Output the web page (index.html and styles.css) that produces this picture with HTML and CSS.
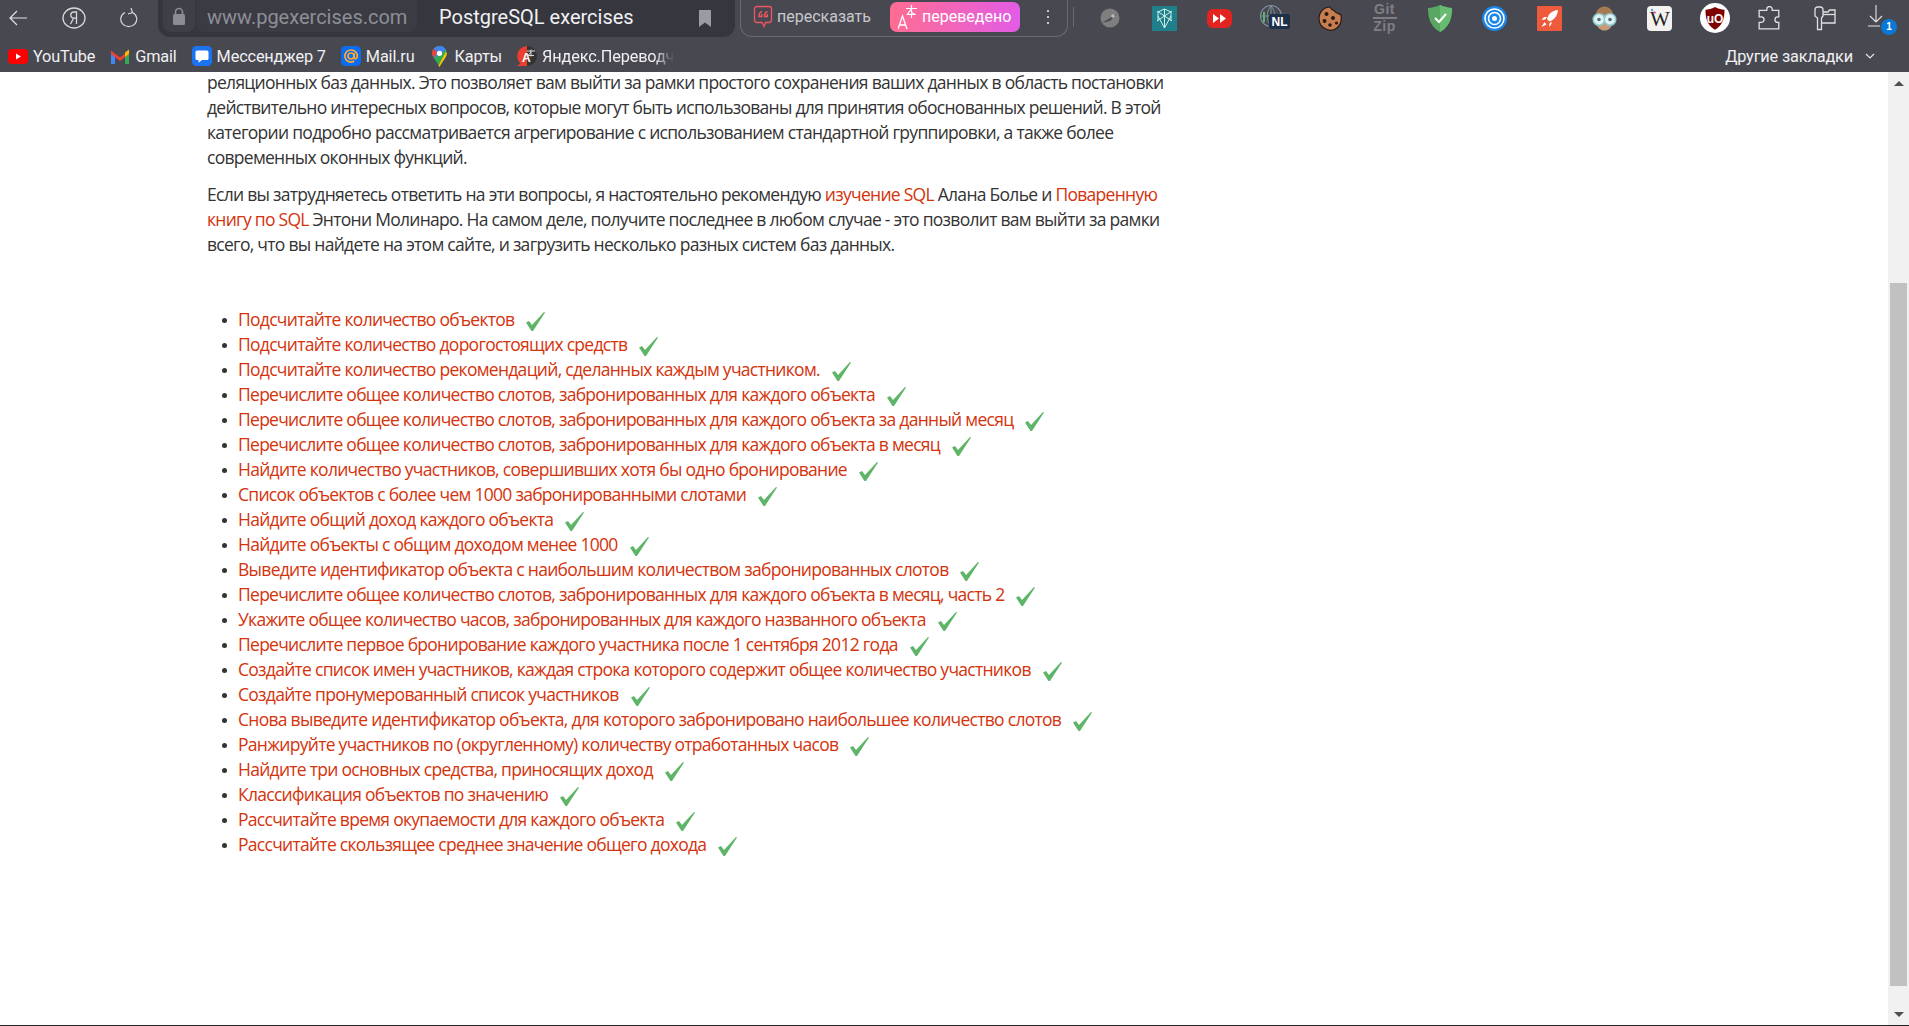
FILE: index.html
```html
<!DOCTYPE html>
<html lang="ru">
<head>
    <meta charset="UTF-8">
    <title>PostgreSQL exercises</title>
    <link rel="stylesheet" href="styles.css">
</head>
<body>
<svg class="defs" width="0" height="0"><symbol id="tick" viewBox="0 0 19 19"><path d="M0 10.500L3 9l3 4L18 0l1 .5L7 19H5.500z" fill="#5fb567"/></symbol></svg>
<div id="chrome">
    <div id="toolbar">
        <div class="nav">
            <svg class="nav-back" width="18" height="16" viewBox="0 0 18 16"><path d="M18 8H1M8 1L1 8l7 7" fill="none" stroke="#e4e4e6" stroke-width="1.200"/></svg>
            <svg class="nav-ya" width="24" height="22" viewBox="0 0 24 22"><ellipse cx="12" cy="11" rx="11" ry="10" fill="none" stroke="#d8d8da" stroke-width="1.300"/><path d="M14.500 17V5h-2.300c-2.200 0-3.400 1.200-3.400 3.100s1.200 3.100 3.400 3.100h2.300M11.500 11.200L8.500 17" fill="none" stroke="#d8d8da" stroke-width="1.300"/></svg>
            <svg class="nav-reload" width="18" height="22" viewBox="0 0 18 22"><path d="M12.500 5.500a8 7.500 0 1 1-7.500 0M11 1l1.500 4.500L8 7" fill="none" stroke="#d8d8da" stroke-width="1.200"/></svg>
        </div>
        <div id="address">
            <div class="lock"><svg width="14" height="18" viewBox="0 0 14 18"><path d="M3.500 8V5a3.500 3.500 0 0 1 7 0v3" fill="none" stroke="#8b8c92" stroke-width="1.600"/><rect x="1" y="7" width="12" height="11" rx="1.500" fill="#8b8c92"/></svg></div>
            <div class="domain">www.pgexercises.com</div>
            <div class="page-title">PostgreSQL exercises</div>
            <svg class="bookmark" width="14" height="18" viewBox="0 0 14 18"><path d="M1 1h12v17l-6-4.500L1 18z" fill="#9b9ca1"/></svg>
        </div>
        <div id="translate">
            <div class="retell">
                <svg width="20" height="23" viewBox="0 0 20 23"><path d="M4 1.500h12a2.500 2.500 0 0 1 2.500 2.500v11a2.500 2.500 0 0 1-2.500 2.500h-3.500L11 21.500l-2-4H4A2.500 2.500 0 0 1 1.500 15V4A2.500 2.500 0 0 1 4 1.500z" fill="none" stroke="#f0565f" stroke-width="1.300"/><path d="M9 6.500C7 7 6 8.500 6 11.500h2.800V9M14.500 6.500c-2 .5-3 2-3 5h2.800V9" fill="none" stroke="#f0565f" stroke-width="1.500"/></svg>
                <span>пересказать</span>
            </div>
            <div class="translated">
                <svg width="20" height="26" viewBox="0 0 20 26"><path d="M0 25L4.500 12 9 25M1.500 21h6" fill="none" stroke="#fff" stroke-width="1.300"/><path d="M8 4.500h11M13.500 1v13M13.500 4.500l-4 6h8l-4-2" fill="none" stroke="#fff" stroke-width="1.200"/></svg>
                <span>переведено</span>
            </div>
            <div class="dots"><i></i><i></i><i></i></div>
        </div>
        <div class="sep"></div>
        <div id="extensions">
            <div class="ext"><svg width="20" height="20" viewBox="0 0 20 20"><circle cx="10" cy="10" r="9.500" fill="#7f7f80"/><path d="M1.500 15L17 6l-7 7z" fill="#4b4b52"/><circle cx="13" cy="8" r="1.800" fill="#bbb"/></svg></div>
            <div class="ext"><svg width="25" height="25" viewBox="0 0 25 25"><rect width="25" height="25" fill="#1f7f8a"/><path d="M12.500 3v19M5 5l15 10M20 5L5 15M6 10l6.500 12L19 10M6 6v9M19 6v9M6 6l6.500-3L19 6" fill="none" stroke="#cfeeee" stroke-width="1"/></svg></div>
            <div class="ext"><svg width="25" height="19" viewBox="0 0 25 19"><rect width="25" height="19" rx="6" fill="#e3231f"/><path d="M6 5l6 4.500L6 14zM13 5l6 4.500L13 14z" fill="#fff"/></svg></div>
            <div class="ext"><svg width="32" height="26" viewBox="0 0 32 26"><circle cx="12" cy="11" r="10.500" fill="none" stroke="#7a8fa0" stroke-width="1.200"/><path d="M12 1v20M1 11h20M12 1c-5 5-5 15 0 20M12 1c5 5 5 15 0 20" fill="none" stroke="#7a8fa0" stroke-width="1"/><path d="M5 7v10" stroke="#5fb567" stroke-width="2"/><rect x="10" y="9" width="21" height="15" rx="2.500" fill="#1c3048"/><text x="20.500" y="21" class="ext-nl">NL</text></svg></div>
            <div class="ext"><svg width="24" height="25" viewBox="0 0 24 25"><path d="M12 1c.500 3 4 2.500 5 4.500s4.500 2 6 3.500c1 5.500-.5 9.500-3.500 12.500S13 25 9 23.500 1 19 1 12.500 6 1 12 1z" fill="#c77d4f" stroke="#2a1a12" stroke-width="1.200"/><circle cx="8.500" cy="8" r="2" fill="#2a1a12"/><circle cx="15" cy="12" r="2" fill="#2a1a12"/><circle cx="6.500" cy="15" r="2" fill="#2a1a12"/><circle cx="12" cy="19" r="1.800" fill="#2a1a12"/><circle cx="18.500" cy="17" r="1.600" fill="#2a1a12"/></svg></div>
            <div class="ext ext-gitzip"><span>Git</span><span class="wave"></span><span>Zip</span></div>
            <div class="ext"><svg width="24" height="27" viewBox="0 0 24 27"><path d="M12 0c4 1.800 8 2.700 12 3 0 10-2.500 19-12 24C2.500 22 0 13 0 3c4-.3 8-1.200 12-3z" fill="#58a863"/><path d="M12 0c4 1.800 8 2.700 12 3 0 10-2.500 19-12 24z" fill="#68bc71"/><path d="M7 13l4 4 7-8" fill="none" stroke="#fff" stroke-width="2"/></svg></div>
            <div class="ext"><svg width="25" height="25" viewBox="0 0 25 25"><circle cx="12.500" cy="12.500" r="12.500" fill="#1a86ea"/><circle cx="12.500" cy="12.500" r="9.500" fill="none" stroke="#fff" stroke-width="1.600"/><circle cx="12.500" cy="12.500" r="6" fill="none" stroke="#fff" stroke-width="1.600"/><circle cx="12.500" cy="12.500" r="2.500" fill="#fff"/></svg></div>
            <div class="ext"><svg width="25" height="25" viewBox="0 0 25 25"><rect width="25" height="25" rx="1" fill="#ee5a3c"/><path d="M21 4c-6 .5-9.500 4-11 9l2.500 2.500C17 14 20.500 10 21 4zM10 11H7l-2.500 3 3.500-.5zM14.500 15.500V18L12 21l.5-3.500zM7.500 16L4.500 21l5-2.500z" fill="#fff"/></svg></div>
            <div class="ext"><svg width="25" height="25" viewBox="0 0 25 25"><ellipse cx="12.500" cy="13" rx="9" ry="11.500" fill="#c59b78"/><path d="M3.500 11c0-7 4.500-10.500 9-10.500s9 3.500 9 10.500c-3.500-3-14.500-3-18 0z" fill="#a67b52"/><circle cx="7" cy="13.500" r="5.800" fill="#dff3f2" stroke="#8fc9d0" stroke-width="1.500"/><circle cx="18" cy="13.500" r="5.800" fill="#dff3f2" stroke="#8fc9d0" stroke-width="1.500"/><circle cx="7" cy="13.500" r="1.800" fill="#4f6d78"/><circle cx="18" cy="13.500" r="1.800" fill="#4f6d78"/></svg></div>
            <div class="ext"><svg width="25" height="25" viewBox="0 0 25 25"><rect width="25" height="25" rx="4" fill="#f4f2ee"/><text x="13" y="20" class="ext-w">W</text><circle cx="5" cy="4" r="1.200" fill="#39b8d8"/><circle cx="7.500" cy="6.500" r="1.200" fill="#e75a9c"/></svg></div>
            <div class="ext"><svg width="30" height="30" viewBox="0 0 30 30"><circle cx="15" cy="15" r="15" fill="#fff"/><path d="M15 4c3.500 1.800 6.500 2.500 9.500 2.700 0 9-1.800 15.500-9.500 20-7.700-4.500-9.500-11-9.500-20C8.500 6.500 11.500 5.800 15 4z" fill="#800000"/><text x="15" y="19.500" class="ext-uo">uO</text></svg></div>
            <div class="ext"><svg width="23" height="24" viewBox="0 0 21 22"><path d="M8 4V3a2.500 2.500 0 0 1 5 0v1h6v6h-1a2.500 2.500 0 0 0 0 5h1v6H1v-6h2a2.500 2.500 0 0 0 0-5H1V4z" fill="none" stroke="#e0e0e2" stroke-width="1.200"/></svg></div>
            <div class="ext"><svg width="22" height="25" viewBox="0 0 22 25"><path d="M1 3.500A2.500 2.500 0 0 1 3.500 1h3A2.500 2.500 0 0 1 9 3.500V10L7.500 12v11.500h-4V12L1 10z" fill="none" stroke="#e0e0e2" stroke-width="1.300"/><path d="M9 6h5l1.500-2H21v13H8" fill="none" stroke="#e0e0e2" stroke-width="1.300"/><path d="M9 8.500h12" stroke="#e0e0e2" stroke-width="1.300"/></svg></div>
            <div class="ext ext-dl">
                <svg width="18" height="22" viewBox="0 0 18 22"><path d="M8 0v17M2 11l6 6 6-6M0 21h12" fill="none" stroke="#e4e4e6" stroke-width="1.100"/></svg>
                <span class="badge">1</span>
            </div>
        </div>
    </div>
    <div id="bookmarks">
        <div class="mark"><span class="fav"><svg width="20" height="15" viewBox="0 0 20 15"><rect width="20" height="15" rx="4" fill="#f00"/><path d="M8 4.500l5 3-5 3z" fill="#fff"/></svg></span>YouTube</div>
        <div class="mark"><span class="fav"><svg width="18" height="15" viewBox="0 0 18 15"><path d="M0 2.500V15h4V5.500z" fill="#4285f4"/><path d="M18 2.500V15h-4V5.500z" fill="#34a853"/><path d="M0 1.500L9 8.500l9-7V5l-9 7-9-7z" fill="#ea4335"/><path d="M14 3.500L18 .5V5l-4 3z" fill="#fbbc04"/></svg></span>Gmail</div>
        <div class="mark"><span class="fav"><svg width="20" height="20" viewBox="0 0 20 20"><rect width="20" height="20" rx="4.500" fill="#1a73f0"/><path d="M5 4.500h10a1.500 1.500 0 0 1 1.500 1.500v6.500A1.500 1.500 0 0 1 15 14h-5l-3.500 2.800V14H5a1.500 1.500 0 0 1-1.500-1.500V6A1.500 1.500 0 0 1 5 4.500z" fill="#fff"/></svg></span>Мессенджер 7</div>
        <div class="mark"><span class="fav"><svg width="20" height="20" viewBox="0 0 20 20"><rect width="20" height="20" rx="4.500" fill="#0a6cf0"/><circle cx="10" cy="10" r="3" fill="none" stroke="#ffa930" stroke-width="1.700"/><path d="M13 7v4c0 2.400 3 2.400 3.200-.6.400-3.700-2.500-6.400-6.200-6.400a6 6 0 1 0 3.200 11" fill="none" stroke="#ffa930" stroke-width="1.700"/></svg></span>Mail.ru</div>
        <div class="mark"><span class="fav"><svg width="15" height="21" viewBox="0 0 14 20"><path d="M7 0a7 7 0 0 1 7 7c0 4-4 7-7 13C4 14 0 11 0 7a7 7 0 0 1 7-7z" fill="#34a853"/><path d="M7 0a7 7 0 0 1 6 3.500L2 11.500C.7 10 0 8.700 0 7a7 7 0 0 1 7-7z" fill="#4285f4"/><path d="M14 7c0 4-4 7-7 13l-1-1.500 7-13z" fill="#fbbc04"/><path d="M1.500 2.500L5 6 2 11C.7 10 0 8.700 0 7c0-1.700.5-3.200 1.500-4.500z" fill="#ea4335"/><circle cx="7" cy="7" r="2.500" fill="#fff"/></svg></span>Карты</div>
        <div class="mark mark-fade"><span class="fav"><svg width="20" height="20" viewBox="0 0 20 20"><circle cx="10" cy="10" r="10" fill="#333"/><path d="M10 0a10 10 0 0 0 0 20z" fill="#e8402c"/><path d="M0 20l10-8v8z" fill="#e8402c"/><text x="5" y="16" class="ya-a">A</text><path d="M10 5h8M14 3.500v7M14 6l-3 3.500h6" fill="none" stroke="#ddd" stroke-width="1"/></svg></span><span class="fade-text">Яндекс.Переводчик</span></div>
        <div class="mark-other">Другие закладки<svg width="10" height="6" viewBox="0 0 10 6"><path d="M1 1l4 4 4-4" fill="none" stroke="#e4e4e6" stroke-width="1.200"/></svg></div>
    </div>
</div>
<div id="viewport">
    <div id="content">
        <p>реляционных баз данных. Это позволяет вам выйти за рамки простого сохранения ваших данных в область постановки действительно интересных вопросов, которые могут быть использованы для принятия обоснованных решений. В этой категории подробно рассматривается агрегирование с использованием стандартной группировки, а также более современных оконных функций.</p>
        <p>Если вы затрудняетесь ответить на эти вопросы, я настоятельно рекомендую <a href="#">изучение SQL</a> Алана Болье и <a href="#">Поваренную книгу по SQL</a> Энтони Молинаро. На самом деле, получите последнее в любом случае - это позволит вам выйти за рамки всего, что вы найдете на этом сайте, и загрузить несколько разных систем баз данных.</p>
        <ul id="tasks">
            <li><a href="#">Подсчитайте количество объектов</a><svg class="tick"><use href="#tick"/></svg></li>
            <li><a href="#">Подсчитайте количество дорогостоящих средств</a><svg class="tick"><use href="#tick"/></svg></li>
            <li><a href="#">Подсчитайте количество рекомендаций, сделанных каждым участником.</a><svg class="tick"><use href="#tick"/></svg></li>
            <li><a href="#">Перечислите общее количество слотов, забронированных для каждого объекта</a><svg class="tick"><use href="#tick"/></svg></li>
            <li><a href="#">Перечислите общее количество слотов, забронированных для каждого объекта за данный месяц</a><svg class="tick"><use href="#tick"/></svg></li>
            <li><a href="#">Перечислите общее количество слотов, забронированных для каждого объекта в месяц</a><svg class="tick"><use href="#tick"/></svg></li>
            <li><a href="#">Найдите количество участников, совершивших хотя бы одно бронирование</a><svg class="tick"><use href="#tick"/></svg></li>
            <li><a href="#">Список объектов с более чем 1000 забронированными слотами</a><svg class="tick"><use href="#tick"/></svg></li>
            <li><a href="#">Найдите общий доход каждого объекта</a><svg class="tick"><use href="#tick"/></svg></li>
            <li><a href="#">Найдите объекты с общим доходом менее 1000</a><svg class="tick"><use href="#tick"/></svg></li>
            <li><a href="#">Выведите идентификатор объекта с наибольшим количеством забронированных слотов</a><svg class="tick"><use href="#tick"/></svg></li>
            <li><a href="#">Перечислите общее количество слотов, забронированных для каждого объекта в месяц, часть 2</a><svg class="tick"><use href="#tick"/></svg></li>
            <li><a href="#">Укажите общее количество часов, забронированных для каждого названного объекта</a><svg class="tick"><use href="#tick"/></svg></li>
            <li><a href="#">Перечислите первое бронирование каждого участника после 1 сентября 2012 года</a><svg class="tick"><use href="#tick"/></svg></li>
            <li><a href="#">Создайте список имен участников, каждая строка которого содержит общее количество участников</a><svg class="tick"><use href="#tick"/></svg></li>
            <li><a href="#">Создайте пронумерованный список участников</a><svg class="tick"><use href="#tick"/></svg></li>
            <li><a href="#">Снова выведите идентификатор объекта, для которого забронировано наибольшее количество слотов</a><svg class="tick"><use href="#tick"/></svg></li>
            <li><a href="#">Ранжируйте участников по (округленному) количеству отработанных часов</a><svg class="tick"><use href="#tick"/></svg></li>
            <li><a href="#">Найдите три основных средства, приносящих доход</a><svg class="tick"><use href="#tick"/></svg></li>
            <li><a href="#">Классификация объектов по значению</a><svg class="tick"><use href="#tick"/></svg></li>
            <li><a href="#">Рассчитайте время окупаемости для каждого объекта</a><svg class="tick"><use href="#tick"/></svg></li>
            <li><a href="#">Рассчитайте скользящее среднее значение общего дохода</a><svg class="tick"><use href="#tick"/></svg></li>
        </ul>
    </div>
    <div id="scrollbar">
        <div class="arrow arrow-up"></div>
        <div class="track"><div class="thumb"></div></div>
        <div class="arrow arrow-down"></div>
    </div>
</div>
<div id="bottomline"></div>
</body>
</html>
```
FILE: styles.css
```css
html, body{ margin:0; padding:0; height:100%; overflow:hidden; background:#fff; }
body{ display:flex; flex-direction:column; font-family:"Open Sans","Noto Sans",sans-serif; }
.defs{ position:absolute; }

#chrome{ height:72px; background:#484851; color:#f0f0f2; flex:none; display:flex; flex-direction:column; font-family:Roboto,"Noto Sans",sans-serif; }
#toolbar{ height:37px; display:flex; align-items:flex-start; }
.nav{ display:flex; align-items:center; width:158px; height:36px; flex:none; }
.nav-back{ margin-left:9px; }
.nav-ya{ margin-left:35px; }
.nav-reload{ margin-left:34px; }

#address{ width:577px; height:37px; background:#35363e; border-radius:0 0 12px 12px; display:flex; align-items:flex-start; flex:none; position:relative; }
.lock{ width:32px; height:32px; margin-left:5px; background:#3e3f47; border-radius:0 0 8px 8px; display:flex; align-items:center; justify-content:center; }
.domain{ width:221px; box-sizing:border-box; margin-left:1px; padding-left:11px; height:32px; line-height:35px; font-size:20px; color:#8e8f96; background:#3a3b43; border-radius:0 0 8px 8px; }
.page-title{ margin-left:22px; font-size:20px; line-height:35px; color:#f2f2f4; }
.bookmark{ position:absolute; right:23px; top:9px; }

#translate{ width:328px; height:37px; border:1px solid #6a6a72; border-top:0; border-radius:0 0 12px 12px; margin-left:5px; box-sizing:border-box; display:flex; align-items:flex-start; flex:none; padding-top:2px; }
.retell{ display:flex; align-items:center; gap:4px; margin-left:12px; height:29px; font-size:16px; color:#c8c8cc; width:137px; flex:none; }
.translated{ display:flex; align-items:center; gap:4px; width:130px; height:30px; box-sizing:border-box; padding:0 0 1px 8px; background:linear-gradient(90deg,#ff6d92,#e25ce6); border-radius:7px; font-size:16px; color:#fff; flex:none; }
.dots{ display:flex; flex-direction:column; gap:4px; margin:8px 0 0 27px; }
.dots i{ width:2px; height:2px; background:#c8c8cc; }
.sep{ width:1px; height:20px; background:#6a6a72; margin:7px 0 0 5px; flex:none; }

#extensions{ display:flex; margin-left:8px; height:36px; }
.ext{ width:55px; height:36px; display:flex; align-items:center; justify-content:center; position:relative; flex:none; }
.ext-nl{ font:bold 12px "Liberation Sans",sans-serif; fill:#fff; text-anchor:middle; }
.ext-w{ font:21px "Liberation Serif",serif; fill:#222; text-anchor:middle; }
.ext-uo{ font:bold 12px "Liberation Sans",sans-serif; fill:#fff; text-anchor:middle; }
.ext-gitzip{ flex-direction:column; font:bold 14px/13px "Liberation Sans",sans-serif; color:#7e7e83; letter-spacing:.5px; }
.ext-gitzip .wave{ width:24px; height:2px; background:#7e7e83; margin:1px 0; }
.ext-dl svg{ margin:-4px 5px 0 0; }
.badge{ position:absolute; left:29px; top:19px; width:16px; height:16px; border-radius:50%; background:#0a78d8; color:#fff; font:bold 10px/16px "Liberation Sans",sans-serif; text-align:center; }

#bookmarks{ height:32px; padding-top:3px; display:flex; align-items:center; padding-left:8px; padding-right:34px; font-size:16.300px; letter-spacing:-.15px; }
.mark{ display:flex; align-items:center; gap:5px; margin-right:15px; white-space:nowrap; }
.fav{ width:20px; height:20px; display:flex; align-items:center; justify-content:center; flex:none; }
.mark-fade{ width:157px; flex:none; margin:0; }
.fade-text{ flex:1; min-width:0; overflow:hidden; -webkit-mask-image:linear-gradient(90deg,#000 85%,transparent); mask-image:linear-gradient(90deg,#000 85%,transparent); }
.ya-a{ font:bold 12px "Liberation Sans",sans-serif; fill:#fff; }
.mark-other{ margin-left:auto; display:flex; align-items:center; gap:12px; white-space:nowrap; }

#viewport{ flex:1; min-height:0; display:flex; overflow:hidden; }
#content{ flex:1; min-width:0; padding:0 0 0 207px; overflow:hidden; color:#333; font-size:17.500px; line-height:25px; letter-spacing:-.72px; }
#content p{ width:960px; margin:0 0 12px; }
#content p:first-child{ margin-top:-2px; }
#content a{ color:#d4330c; text-decoration:none; }
#tasks{ margin:50px 0 0; padding:0 0 0 31px; width:900px; list-style:none; }
#tasks li{ white-space:nowrap; height:25px; }
#tasks li::before{ content:""; display:inline-block; width:5px; height:5px; border-radius:50%; background:#333; margin:0 11px 0 -16px; vertical-align:3px; }
.tick{ width:19px; height:19px; margin-left:12px; vertical-align:-5px; }

#scrollbar{ width:21px; background:#f1f1f1; display:flex; flex-direction:column; align-items:center; flex:none; }
.arrow{ width:0; height:0; border-left:5px solid transparent; border-right:5px solid transparent; flex:none; }
.arrow-up{ border-bottom:5px solid #505050; margin:9px 0 6px; }
.arrow-down{ border-top:5px solid #505050; margin:26px 0 8px; }
.track{ flex:1; width:17px; padding-top:191px; box-sizing:border-box; display:flex; min-height:0; }
.thumb{ flex:1; background:#c1c1c1; }
#bottomline{ height:1px; background:#222; flex:none; }
```
